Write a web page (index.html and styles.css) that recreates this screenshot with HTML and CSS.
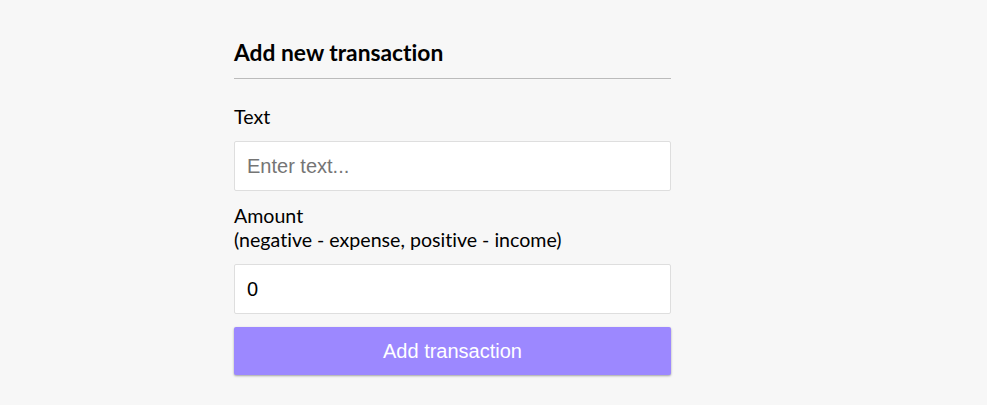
FILE: index.html
```html
<!DOCTYPE html>
<html lang="en">
<head>
<meta charset="UTF-8">
<title>Expense Tracker</title>
<link rel="stylesheet" href="styles.css">
</head>
<body>
<div class="container">
  <h3 class="title">Add new transaction</h3>
  <form class="form">
    <div class="form-control">
      <label class="label" for="text">Text</label>
      <input class="field" type="text" id="text" placeholder="Enter text...">
    </div>
    <div class="form-control">
      <label class="label" for="amount">Amount <br>(negative - expense, positive - income)</label>
      <input class="field" type="number" id="amount" value="0">
    </div>
    <button class="btn" type="button">Add transaction</button>
  </form>
</div>
</body>
</html>
```

FILE: styles.css
```css
* { box-sizing: border-box; }
html, body { margin: 0; padding: 0; }
body {
  background-color: #f7f7f7;
  font-family: "Lato", "Noto Sans", sans-serif;
  font-variant-ligatures: none;
  min-height: 405px;
}
.container {
  width: 437px;
  margin-left: 234px;
  padding-top: 38px;
}
.title {
  font-size: 22.8px;
  font-weight: 700;
  line-height: 28px;
  color: #000;
  margin: 0 0 13px;
  padding-bottom: 12px;
  border-bottom: 1px solid #bbb;
}
.form { margin: 0; }
.form-control { display: block; }
.label {
  display: inline-block;
  margin: 12.5px 0;
  font-size: 19.6px;
  line-height: 24px;
  color: #000;
}
.field {
  display: block;
  width: 100%;
  height: 50px;
  border: 1px solid #dedede;
  border-radius: 2px;
  font-family: "Liberation Sans", Arial, sans-serif;
  font-size: 20px;
  line-height: 23px;
  padding: 12px;
  background: #fff;
  color: #000;
  outline: none;
}
.field::placeholder { color: #757575; }
.field::-webkit-outer-spin-button,
.field::-webkit-inner-spin-button { -webkit-appearance: none; margin: 0; }
.field[type=number] { -moz-appearance: textfield; }
.btn {
  display: block;
  width: 100%;
  height: 48px;
  margin: 13px 0 37px;
  padding: 12px;
  border: 0;
  border-radius: 2px;
  background-color: #9c88ff;
  color: #fff;
  font-family: "Liberation Sans", Arial, sans-serif;
  font-size: 20px;
  line-height: 23px;
  box-shadow: 0 1px 3px rgba(0,0,0,0.12), 0 1px 2px rgba(0,0,0,0.24);
  cursor: pointer;
}
```
